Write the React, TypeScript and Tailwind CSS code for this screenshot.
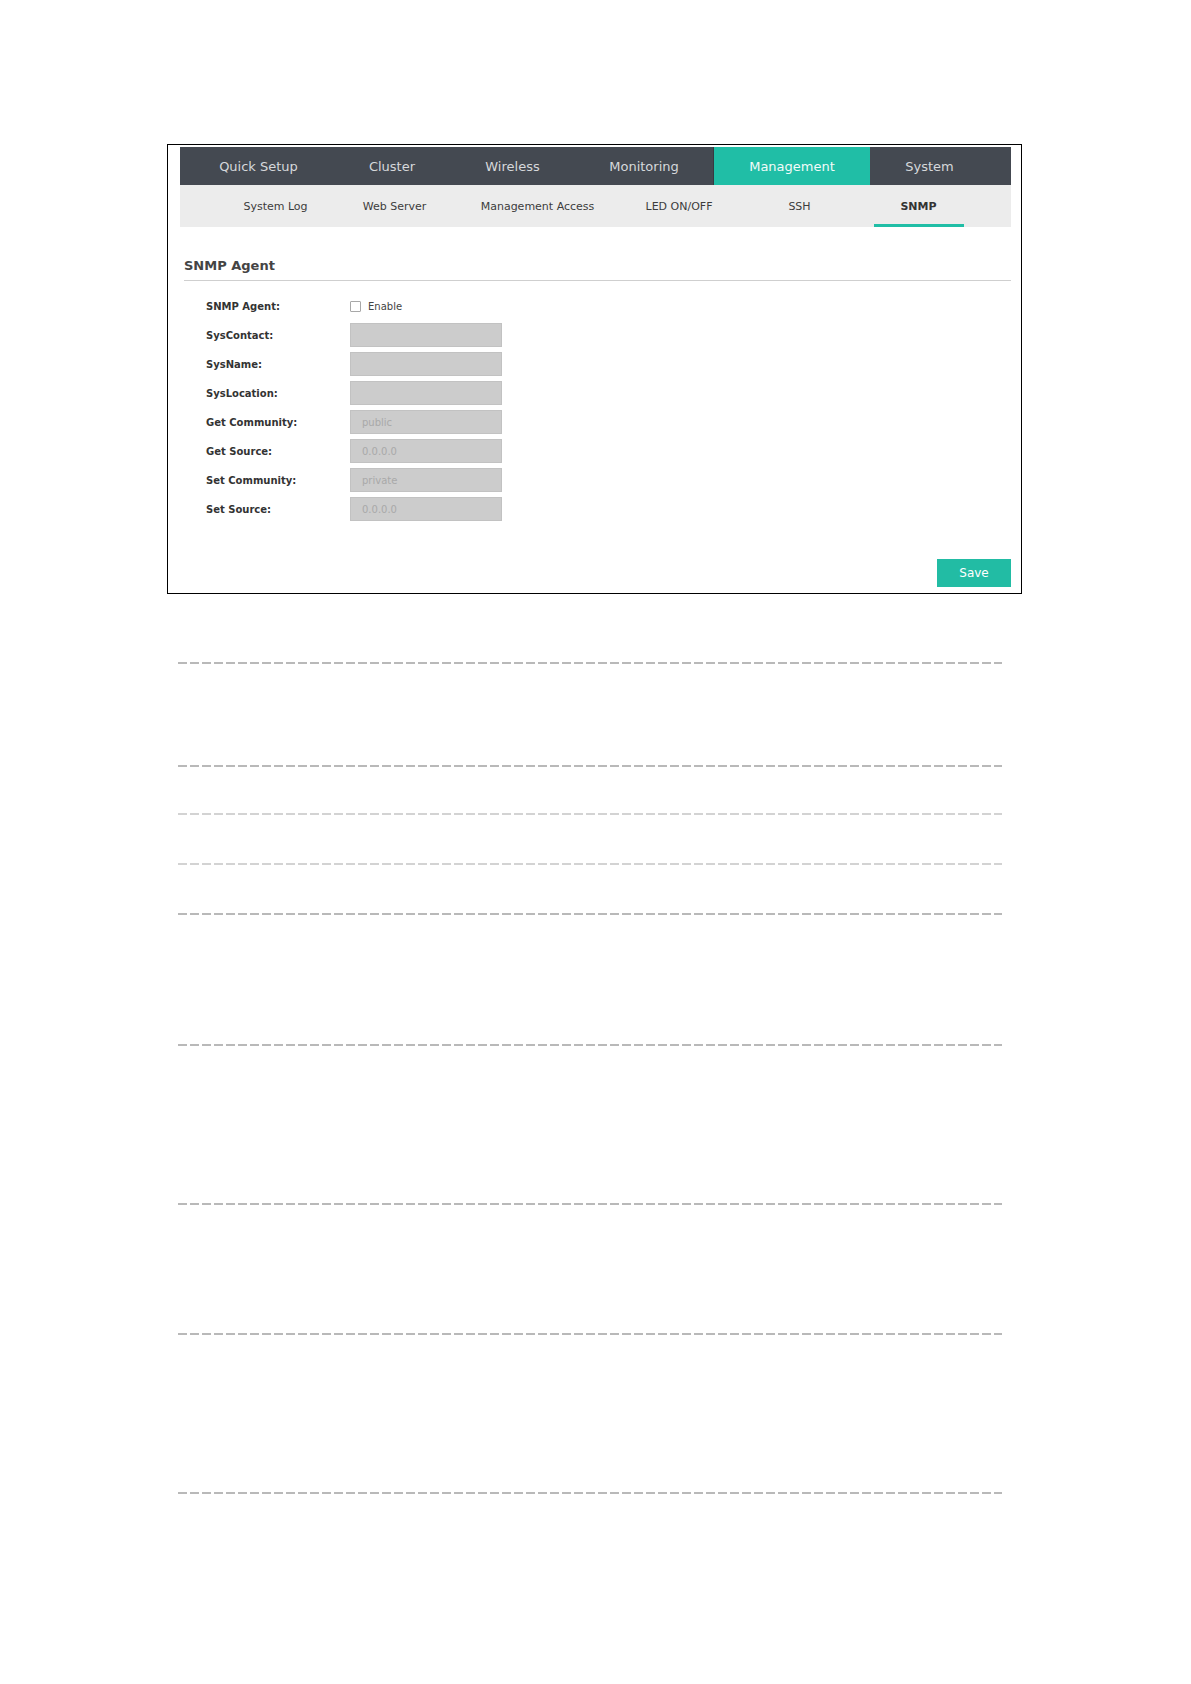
import React from "react";

const topTabs: { label: string; w: string; active?: boolean }[] = [
  { label: "Quick Setup", w: "w-[151px]" },
  { label: "Cluster", w: "w-[116px]" },
  { label: "Wireless", w: "w-[125px]" },
  { label: "Monitoring", w: "w-[139px]" },
  { label: "Management", w: "w-[156px]", active: true },
  { label: "System", w: "w-[119px]" },
];

const subTabs: { label: string; w: string; active?: boolean }[] = [
  { label: "System Log", w: "w-[119px]" },
  { label: "Web Server", w: "w-[119px]" },
  { label: "Management Access", w: "w-[167px]" },
  { label: "LED ON/OFF", w: "w-[116px]" },
  { label: "SSH", w: "w-[125px]" },
  { label: "SNMP", w: "w-[113px]", active: true },
];

const fields: { label: string; value: string }[] = [
  { label: "SysContact:", value: "" },
  { label: "SysName:", value: "" },
  { label: "SysLocation:", value: "" },
  { label: "Get Community:", value: "public" },
  { label: "Get Source:", value: "0.0.0.0" },
  { label: "Set Community:", value: "private" },
  { label: "Set Source:", value: "0.0.0.0" },
];

const dashed: { mt: string; light?: boolean }[] = [
  { mt: "mt-[68px]" },
  { mt: "mt-[101px]" },
  { mt: "mt-[46px]", light: true },
  { mt: "mt-[48px]", light: true },
  { mt: "mt-[48px]" },
  { mt: "mt-[129px]" },
  { mt: "mt-[157px]" },
  { mt: "mt-[128px]" },
  { mt: "mt-[157px]" },
];

export default function App() {
  return (
    <div className="w-[1191px] min-h-[1684px] bg-white font-['DejaVu_Sans',Verdana,sans-serif] pt-[144px]">
      <div className="ml-[167px] w-[855px] border border-black pt-[2px] pl-[12px] pr-[10px] pb-[6px]">
        {/* top nav */}
        <div className="flex h-[38px] bg-[#444951] pl-[3px]">
          {topTabs.map((t) =>
            t.active ? (
              <div
                key={t.label}
                className={`${t.w} flex items-center justify-center pt-[1px] bg-[#20bea6] text-[13px] text-[#f2fbf9]`}
              >
                {t.label}
              </div>
            ) : t.label === "Monitoring" ? (
              <div
                key={t.label}
                className={`${t.w} flex items-center justify-center pt-[1px] text-[13px] text-[#d6d8db] border-r border-[#363a41]`}
              >
                {t.label}
              </div>
            ) : (
              <div
                key={t.label}
                className={`${t.w} flex items-center justify-center pt-[1px] text-[13px] text-[#d6d8db]`}
              >
                {t.label}
              </div>
            )
          )}
        </div>
        {/* sub nav */}
        <div className="flex h-[42px] bg-[#ececec] pl-[36px]">
          {subTabs.map((t) => (
            <div key={t.label} className={`${t.w} flex flex-col items-center pt-[5px]`}>
              <div
                className={
                  t.active
                    ? "flex-1 flex items-center text-[11px] font-bold text-[#333]"
                    : "flex-1 flex items-center text-[11px] text-[#3c3c3c]"
                }
              >
                {t.label}
              </div>
              {t.active ? (
                <div className="h-[3px] w-[90px] bg-[#20bea6]" />
              ) : (
                <div className="h-[3px]" />
              )}
            </div>
          ))}
        </div>
        {/* heading */}
        <div className="mt-[31px] ml-[4px] border-b border-[#cfcfcf] pb-[6px]">
          <div className="text-[13px] leading-[16px] font-bold text-[#444]">SNMP Agent</div>
        </div>
        {/* form */}
        <div className="mt-[13px] pl-[26px] flex flex-col gap-[5px]">
          <div className="flex h-[24px] items-center">
            <div className="w-[144px] text-[10px] font-bold text-[#333]">SNMP Agent:</div>
            <div className="flex items-center gap-[7px]">
              <div className="w-[11px] h-[11px] border border-[#a8a8a8] bg-white rounded-[1px]" />
              <span className="text-[10px] text-[#444]">Enable</span>
            </div>
          </div>
          {fields.map((f) => (
            <div key={f.label} className="flex h-[24px] items-center">
              <div className="w-[144px] text-[10px] font-bold text-[#333]">{f.label}</div>
              <div className="w-[152px] h-[24px] bg-[#cccccc] border border-[#c2c2c2] flex items-center pl-[11px] text-[10px] text-[#a9a9a9]">
                {f.value}
              </div>
            </div>
          ))}
        </div>
        {/* save */}
        <div className="mt-[38px] flex justify-end">
          <div className="w-[74px] h-[28px] bg-[#22bca4] flex items-center justify-center text-[12px] text-white">
            Save
          </div>
        </div>
      </div>
      {/* dashed separators */}
      <div className="ml-[178px] w-[824px] flex flex-col">
        {dashed.map((d, i) => (
          <div
            key={i}
            className={
              d.light
                ? `${d.mt} h-[2px] bg-[repeating-linear-gradient(to_right,#d3d3d3_0px,#d3d3d3_9px,transparent_9px,transparent_12px)]`
                : `${d.mt} h-[2px] bg-[repeating-linear-gradient(to_right,#b9b9b9_0px,#b9b9b9_9px,transparent_9px,transparent_12px)]`
            }
          />
        ))}
      </div>
    </div>
  );
}
